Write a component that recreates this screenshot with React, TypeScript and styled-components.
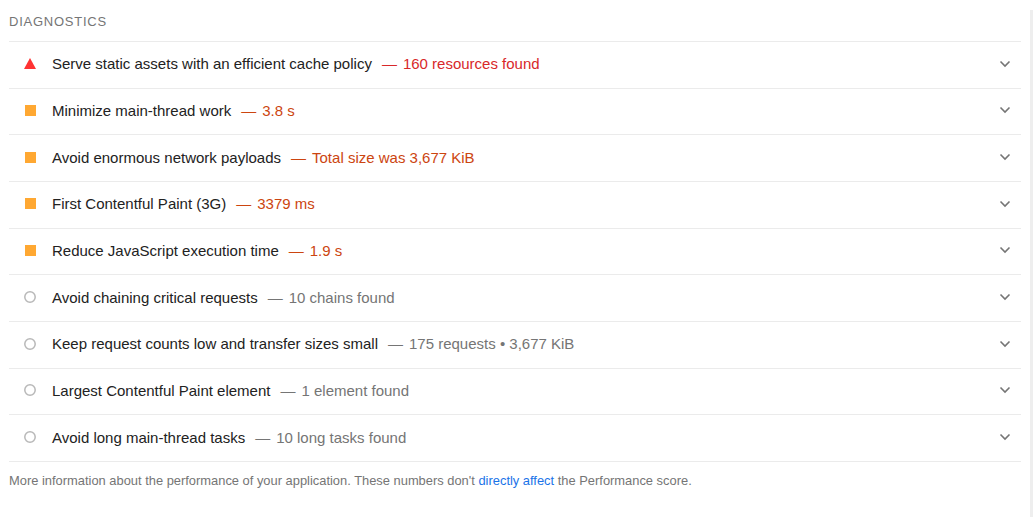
import React from "react";
import styled, { createGlobalStyle } from "styled-components";

const Global = createGlobalStyle`
  html, body { margin: 0; padding: 0; background: #fff; }
  body { font-family: "Liberation Sans", Arial, sans-serif; }
`;

const Page = styled.div`
  display: flex;
  width: 1036px;
  height: 529px;
  background: #fff;
`;

const Main = styled.div`
  width: 1012px;
  margin-left: 9px;
  display: flex;
  flex-direction: column;
`;

const Edge = styled.div`
  width: 3px;
  height: 507px;
  margin-top: 10px;
  margin-left: 9px;
  background: #eeeeee;
`;

const Header = styled.div`
  height: 41px;
  padding-top: 1px;
  box-sizing: border-box;
  display: flex;
  align-items: center;
  font-size: 13px;
  letter-spacing: 0.75px;
  text-transform: uppercase;
  color: #757575;
`;

const List = styled.div`
  border-bottom: 1px solid #ebebeb;
`;

const Row = styled.div`
  height: 46.67px;
  box-sizing: border-box;
  border-top: 1px solid #ebebeb;
  padding-bottom: 2px;
  display: flex;
  align-items: center;
  padding-left: 15px;
  padding-right: 10px;
  font-size: 15px;
  color: #222222;
`;

const IconBox = styled.div`
  width: 12px;
  height: 12px;
  margin-right: 16px;
  display: flex;
  align-items: center;
  justify-content: center;
  flex: none;
`;

const Square = styled.div`
  width: 11px;
  height: 11px;
  background: #ffa832;
`;

const Title = styled.span`
  flex: 1;
  white-space: nowrap;
`;

const Display = styled.span<{ $tone: "fail" | "average" | "info" }>`
  color: ${(p) =>
    p.$tone === "fail" ? "#d8282a" : p.$tone === "average" ? "#cc4510" : "#757575"};
  &::before {
    content: "\\2014";
    margin: 0 6px 0 10px;
  }
`;

const Chevron = styled.svg`
  width: 12px;
  height: 8px;
  flex: none;
`;

const Footer = styled.div`
  padding-top: 11px;
  font-size: 12.9px;
  color: #757575;
`;

const Link = styled.a`
  color: #1a73e8;
  text-decoration: none;
`;

type Tone = "fail" | "average" | "info";

const items: { title: string; value: string; tone: Tone }[] = [
  { title: "Serve static assets with an efficient cache policy", value: "160 resources found", tone: "fail" },
  { title: "Minimize main-thread work", value: "3.8 s", tone: "average" },
  { title: "Avoid enormous network payloads", value: "Total size was 3,677 KiB", tone: "average" },
  { title: "First Contentful Paint (3G)", value: "3379 ms", tone: "average" },
  { title: "Reduce JavaScript execution time", value: "1.9 s", tone: "average" },
  { title: "Avoid chaining critical requests", value: "10 chains found", tone: "info" },
  { title: "Keep request counts low and transfer sizes small", value: "175 requests • 3,677 KiB", tone: "info" },
  { title: "Largest Contentful Paint element", value: "1 element found", tone: "info" },
  { title: "Avoid long main-thread tasks", value: "10 long tasks found", tone: "info" },
];

function Icon({ tone }: { tone: Tone }) {
  if (tone === "fail")
    return (
      <IconBox>
        <svg width="12" height="11" viewBox="0 0 12 11">
          <polygon points="6,0 12,11 0,11" fill="#ff3333" />
        </svg>
      </IconBox>
    );
  if (tone === "average")
    return (
      <IconBox>
        <Square />
      </IconBox>
    );
  return (
    <IconBox>
      <svg width="12" height="12" viewBox="0 0 12 12">
        <circle cx="6" cy="6" r="5.2" fill="none" stroke="#b8b8b8" strokeWidth="1.5" />
      </svg>
    </IconBox>
  );
}

export default function App() {
  return (
    <Page>
      <Global />
      <Main>
        <Header>Diagnostics</Header>
        <List>
          {items.map((it) => (
            <Row key={it.title}>
              <Icon tone={it.tone} />
              <Title>
                {it.title}
                <Display $tone={it.tone}>{it.value}</Display>
              </Title>
              <Chevron viewBox="0 0 12 8">
                <path d="M1.5 1.5 L6 6 L10.5 1.5" fill="none" stroke="#757575" strokeWidth="1.6" />
              </Chevron>
            </Row>
          ))}
        </List>
        <Footer>
          More information about the performance of your application. These numbers don't{" "}
          <Link href="#">directly affect</Link> the Performance score.
        </Footer>
      </Main>
      <Edge />
    </Page>
  );
}
